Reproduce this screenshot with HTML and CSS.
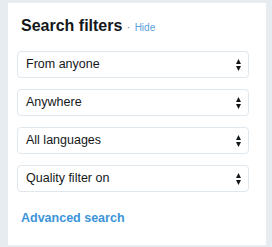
FILE: index.html
```html
<!DOCTYPE html>
<html>
<head>
<meta charset="utf-8">
<link rel="stylesheet" href="styles.css">
</head>
<body>
<div class="card">
  <h3 class="title">Search filters <span class="sep">·</span> <a class="hide" href="#">Hide</a></h3>
  <div class="selects">
    <div class="select"><span>From anyone</span><svg class="arrows" width="5" height="12" viewBox="0 0 5 12"><path d="M2.5 0L5 5H0Z M0 7H5L2.5 12Z" fill="#14171a"/></svg></div>
    <div class="select"><span>Anywhere</span><svg class="arrows" width="5" height="12" viewBox="0 0 5 12"><path d="M2.5 0L5 5H0Z M0 7H5L2.5 12Z" fill="#14171a"/></svg></div>
    <div class="select"><span>All languages</span><svg class="arrows" width="5" height="12" viewBox="0 0 5 12"><path d="M2.5 0L5 5H0Z M0 7H5L2.5 12Z" fill="#14171a"/></svg></div>
    <div class="select"><span>Quality filter on</span><svg class="arrows" width="5" height="12" viewBox="0 0 5 12"><path d="M2.5 0L5 5H0Z M0 7H5L2.5 12Z" fill="#14171a"/></svg></div>
  </div>
  <a class="advanced" href="#">Advanced search</a>
</div>
</body>
</html>
```
FILE: styles.css
```css
html, body {
  margin: 0;
  background: #e6ecf0;
}
body {
  padding: 3px 6px 2px 8px;
  font-family: "Liberation Sans", Arial, sans-serif;
  color: #14171a;
}
.card {
  box-sizing: border-box;
  width: 258px;
  height: 242px;
  background: #fff;
  padding: 13px 0 0 13px;
}
.title {
  margin: 0;
  font-size: 16px;
  line-height: 19px;
  font-weight: bold;
  white-space: nowrap;
}
.sep {
  font-size: 10px;
  font-weight: normal;
  color: #657786;
}
.hide {
  font-size: 10px;
  font-weight: normal;
  color: #5b9fe0;
  text-decoration: none;
}
.selects {
  margin: 14px 0 0 -4px;
  display: flex;
  flex-direction: column;
  gap: 11px;
}
.select {
  box-sizing: border-box;
  width: 232px;
  height: 27px;
  border: 1px solid #e1e8ed;
  border-radius: 4px;
  display: flex;
  align-items: center;
  justify-content: space-between;
  padding: 0 7px 0 8px;
  font-size: 12.5px;
  line-height: 15px;
}
.arrows {
  display: block;
}
.advanced {
  display: block;
  margin-top: 19px;
  font-size: 12.5px;
  line-height: 15px;
  font-weight: bold;
  color: #3b94d9;
  text-decoration: none;
}
```
